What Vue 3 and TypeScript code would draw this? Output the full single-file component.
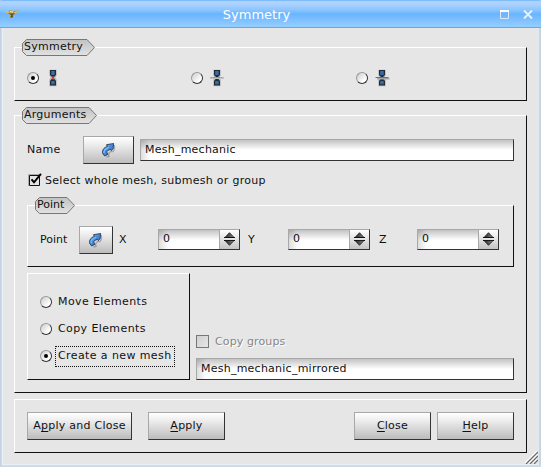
<script setup lang="ts">
import { ref } from 'vue'

interface Axis {
  name: string
  value: number
}

const mirror = ref(0)
const name = ref('Mesh_mechanic')
const wholeMesh = ref(true)
const axes = ref<Axis[]>([
  { name: 'X', value: 0 },
  { name: 'Y', value: 0 },
  { name: 'Z', value: 0 },
])
const actions = ['Move Elements', 'Copy Elements', 'Create a new mesh']
const action = ref(2)
const newName = ref('Mesh_mechanic_mirrored')

function step(axis: Axis, by: number) {
  axis.value += by
}
</script>

<template>
  <div class="window">
    <svg class="defs" width="0" height="0" aria-hidden="true">
      <defs>
        <linearGradient id="tag-fill" x1="0" y1="0" x2="0" y2="1">
          <stop offset="0" stop-color="#c2c2c2" />
          <stop offset="1" stop-color="#e2e2e2" />
        </linearGradient>
        <linearGradient id="arrow-fill" x1="0" y1="0" x2="1" y2="1">
          <stop offset="0" stop-color="#74b4f4" />
          <stop offset="1" stop-color="#1b62b8" />
        </linearGradient>
        <linearGradient id="spin-fill" x1="0" y1="0" x2="1" y2="0">
          <stop offset="0" stop-color="#222" />
          <stop offset="1" stop-color="#888" />
        </linearGradient>
        <symbol id="pick" viewBox="0 0 16 16">
          <path d="M5.5 15 L8 14.5 L7.4 12 L9.5 9.6 L12 9.5 L13.4 7 V3" fill="none" stroke="#777" stroke-width="1.4" opacity=".55" />
          <path d="M3.7 14 L1.7 11.5 Q1 9 2.6 6.8 Q4 5 6.3 4.6 L5.5 2.7 L12.6 1.5 L12.2 6.5 L10.3 8.7 L9.4 7.4 Q6.6 8 6 9.6 Q5.6 10.8 6.8 12.4 Z" fill="url(#arrow-fill)" stroke="#172b49" stroke-width=".8" />
          <path d="M3 11 Q2.6 6.8 8 5.3" fill="none" stroke="#78bdff" stroke-width="1.2" />
        </symbol>
      </defs>
    </svg>

    <header class="titlebar">
      <svg class="app-icon" width="16" height="10" viewBox="0 0 16 10">
        <path d="M0 2 L4 2.4 L6 1 L9 2 L15 1.5 L11.5 5 L9.5 5.8 L9 8.5 L5.5 8.5 L7 6 L3.5 4.6 Z" fill="#c09a35" />
        <path d="M0 2 L4 2.4 L6 3.2 L3 4 Z M10 3.6 L15 1.5 L11.5 4.6 Z" fill="#dcc78a" />
        <path d="M4.5 4.6 L11 4.4 L8.6 5.9 L9 8.2 L6.3 8.7 L7.3 6 Z" fill="#5d4a20" />
        <path d="M6 2.6 L9 3" stroke="#fff1ab" />
      </svg>
      <h1>Symmetry</h1>
      <svg class="maximize" width="9" height="9" viewBox="0 0 9 9">
        <path d="M.5 1.5 V8.5 H8.5 V1.5" fill="none" stroke="#e0eaf4" />
        <path d="M0 1 H9" stroke="#fff" stroke-width="2" />
      </svg>
      <svg class="close" width="10" height="9" viewBox="0 0 10 9">
        <path d="M1 .5 L9 8.5 M9 .5 L1 8.5" stroke="#e9f1f8" stroke-width="2" />
      </svg>
    </header>

    <main>
      <section class="group symmetry">
        <div class="tag tag-symmetry">
          <svg width="73" height="17" viewBox="0 0 73 17">
            <path d="M4.5 .5 H65 L72.5 8.5 L65 16.5 H4.5 L.5 12.5 V4.5 Z" fill="url(#tag-fill)" stroke="#777" />
          </svg>
          <span>Symmetry</span>
        </div>
        <div class="mirror-row">
          <div v-for="i in 3" :key="i" class="mirror-choice" @click="mirror = i - 1">
            <span class="radio" :class="{ on: mirror === i - 1 }" />
            <svg width="16" height="18" viewBox="0 0 16 18">
              <path d="M5 1.5 H11 V6 L9.7 8.5 L11 11 V16.5 H5 V11 L6.3 8.5 L5 6 Z" fill="#b5b5b5" stroke="#b9b9b9" stroke-width="1.5" />
              <path d="M5 1 H11 V6 L9 8 H7 L5 6 Z M7 9.5 H9 L11 12 V16.5 H5 V12 Z" fill="#202c38" />
              <path d="M6.2 2 H9.7 V6 H6.2 Z M6.2 12 H9.7 V15.3 H6.2 Z" fill="#356dab" />
              <rect v-if="i === 1" x="7" y="7.3" width="2" height="3.3" fill="#c94736" />
              <path v-if="i === 2" d="M1 9.5 H15" stroke="#c4c4c4" />
              <path v-if="i === 2" d="M1.5 8.5 H14.5" stroke="#c87b7b" stroke-dasharray="2 .5" />
              <path v-if="i === 3" d="M3 9.7 H15.5" stroke="#a5a5a5" stroke-width="1.5" />
              <path v-if="i === 3" d="M1.5 8.5 H14.5" stroke="#c94a46" />
            </svg>
          </div>
        </div>
      </section>

      <section class="group arguments">
        <div class="tag tag-arguments">
          <svg width="76" height="17" viewBox="0 0 76 17">
            <path d="M4.5 .5 H67 L74.5 8.5 L67 16.5 H4.5 L.5 12.5 V4.5 Z" fill="url(#tag-fill)" stroke="#777" />
          </svg>
          <span>Arguments</span>
        </div>

        <div class="name-row">
          <label>Name</label>
          <button class="btn pick-wide"><svg width="16" height="16"><use href="#pick" /></svg></button>
          <input v-model="name" class="field" spellcheck="false" />
        </div>

        <div class="check-row" @click="wholeMesh = !wholeMesh">
          <svg width="14" height="14" viewBox="0 0 14 14">
            <rect x="1" y="2" width="11" height="11" fill="#e2e2e2" />
            <path d="M.5 13 V1.5 H12" fill="none" stroke="#aaa" />
            <path d="M1.5 2.5 H11.5 V12.5 H1.5 Z" fill="none" stroke="#111" />
            <path v-if="wholeMesh" d="M3.5 6.3 L6 9.3 L13 .8" fill="none" stroke="#000" stroke-width="2" />
          </svg>
          <span>Select whole mesh, submesh or group</span>
        </div>

        <section class="group point">
          <div class="tag tag-point">
            <svg width="41" height="17" viewBox="0 0 41 17">
              <path d="M4.5 .5 H32 L39.5 8.5 L32 16.5 H4.5 L.5 12.5 V4.5 Z" fill="url(#tag-fill)" stroke="#777" />
            </svg>
            <span>Point</span>
          </div>
          <div class="point-row">
            <label class="point-label">Point</label>
            <button class="btn pick-small"><svg width="16" height="16"><use href="#pick" /></svg></button>
            <div v-for="axis in axes" :key="axis.name" class="axis">
              <label>{{ axis.name }}</label>
              <div class="spin">
                <span class="spin-value">{{ axis.value }}</span>
                <span class="spin-buttons">
                  <svg width="11" height="14" viewBox="0 0 11 14">
                    <path d="M5.5 .7 L10 5.5 H1 Z" fill="url(#spin-fill)" stroke="#111" stroke-width=".8" @click="step(axis, 1)" />
                    <path d="M0 5.5 H11 M0 8.5 H11" stroke="#111" />
                    <path d="M5.5 13.3 L10 8.5 H1 Z" fill="url(#spin-fill)" stroke="#111" stroke-width=".8" @click="step(axis, -1)" />
                  </svg>
                </span>
              </div>
            </div>
          </div>
        </section>

        <div class="lower">
          <div class="group actions">
            <div v-for="(label, i) in actions" :key="label" class="action" @click="action = i">
              <span class="radio" :class="{ on: action === i }" />
              <span class="action-label" :class="{ focused: action === i }">{{ label }}</span>
            </div>
          </div>
          <div class="copy">
            <div class="copy-check"><span class="box" /><span class="copy-label">Copy groups</span></div>
            <input v-model="newName" class="field" spellcheck="false" />
          </div>
        </div>
      </section>

      <footer class="group buttons">
        <button class="btn apply-close"><span>A<u>p</u>ply and Close</span></button>
        <button class="btn apply"><span><u>A</u>pply</span></button>
        <button class="btn dismiss"><span><u>C</u>lose</span></button>
        <button class="btn help"><span><u>H</u>elp</span></button>
      </footer>
    </main>

    <svg class="grip" width="13" height="13" viewBox="0 0 13 13">
      <path d="M0 12 L12 0 M4 12 L12 4 M8 12 L12 8" stroke="#fff" stroke-width="1.2" />
      <path d="M1 13 L13 1 M5 13 L13 5 M9 13 L13 9" stroke="#666" stroke-width="1.2" />
    </svg>
  </div>
</template>

<style>
body {
  margin: 0;
  overflow: hidden;
}
</style>

<style scoped>
* {
  box-sizing: border-box;
}
.window {
  position: relative;
  width: 541px;
  height: 467px;
  background: #e6e6e6;
  box-shadow: inset 1px 0 #c5d1e0, inset 2px -2px #d0dbe6, inset -2px -2px #c8d6e1, inset 3px -3px #e8f0f7, inset -4px -3px #dfe9f1;
  font: 11px/14px "DejaVu Sans", sans-serif;
  letter-spacing: 0.24px;
  color: #111;
}
.defs {
  position: absolute;
}
svg {
  display: block;
  flex: none;
}
.titlebar {
  display: flex;
  height: 28px;
  border-top: 1px solid #7dbdfb;
  border-bottom: 1px solid #64a7ea;
  border-radius: 2px 2px 0 0;
  background: linear-gradient(#add0fc 0, #b1d3fd 2px, #8bc5ff 9px, #6ab5ff 13px, #78bcff 17px, #94ceff 100%);
}
.app-icon {
  margin: 8px 0 0 4px;
}
h1 {
  flex: 1;
  margin: 5px 0 0 4px;
  padding-right: 11px;
  font: 13px/18px "DejaVu Sans", sans-serif;
  letter-spacing: 0;
  text-align: center;
  color: #fff;
}
.maximize {
  margin: 9px 14px 0 0;
}
.close {
  margin: 9px 8px 0 0;
}
main {
  display: flex;
  flex-direction: column;
  padding: 19px 14px 0;
}
.group {
  border: 1px solid;
  border-color: #fff #111 #111 #fff;
}
.symmetry {
  height: 54px;
}
.arguments {
  height: 278px;
  margin-top: 14px;
}
.tag {
  display: grid;
  height: 17px;
  margin: -9px 0 0 7px;
}
.tag > * {
  grid-area: 1 / 1;
}
.tag span {
  padding: 1px 0 0 2px;
}
.mirror-row {
  display: flex;
  gap: 132px;
  padding: 13px 0 0 12px;
}
.mirror-choice {
  display: flex;
  align-items: center;
  gap: 6px;
  width: 33px;
}
.radio {
  flex: none;
  display: grid;
  place-items: center;
  width: 12px;
  height: 12px;
  border: 1px solid;
  border-color: #999 #333 #333 #999;
  border-radius: 50%;
  background: linear-gradient(135deg, #ccc, #fff 75%);
}
.radio.on::after {
  content: "";
  width: 4px;
  height: 4px;
  border-radius: 50%;
  background: #000;
}
.mirror-choice:nth-child(2) {
  margin-left: -1px;
}
.name-row {
  display: flex;
  height: 28px;
  margin: 12px 0 0 12px;
}
.name-row label {
  width: 56px;
  padding-top: 7px;
}
.btn {
  display: flex;
  align-items: center;
  justify-content: center;
  height: 28px;
  padding: 0;
  border: 1px solid;
  border-color: #a8a8a8 #333 #333 #a8a8a8;
  background: linear-gradient(#fff, #f0f0f0 25%, #bcbcbc);
  font: 11px/14px "DejaVu Sans", sans-serif;
  letter-spacing: 0.24px;
  color: #111;
}
.btn u {
  text-underline-offset: 2px;
  text-decoration-skip-ink: none;
}
.btn span {
  padding-bottom: 1px;
}
.pick-wide {
  width: 51px;
}
.pick-small {
  width: 34px;
}
.field {
  display: block;
  height: 22px;
  padding: 0 4px 2px;
  border: 1px solid;
  border-color: #a8a8a8 #333 #333 #a8a8a8;
  border-radius: 0;
  outline: none;
  background: linear-gradient(90deg, #0002, #0000 9px), linear-gradient(#c3c3c3, #fff 10px);
  font: 11px/14px "DejaVu Sans", sans-serif;
  letter-spacing: 0.24px;
  color: #111;
}
.name-row .field {
  width: 374px;
  margin: 3px 0 0 6px;
}
.check-row {
  display: flex;
  height: 14px;
  margin: 10px 0 0 13px;
}
.check-row svg {
  margin-top: -1px;
}
.check-row span {
  padding-left: 3px;
  letter-spacing: 0.29px;
}
.point {
  width: 487px;
  height: 62px;
  margin: 17px 0 0 12px;
}
.point .tag span,
.point-label {
  letter-spacing: 0;
}
.point-row {
  display: flex;
  height: 28px;
  margin: 12px 0 0 12px;
}
.point-label {
  width: 39px;
  padding-top: 7px;
}
.axis {
  display: flex;
  width: 121px;
  margin: 3px 0 0 6px;
}
.axis + .axis {
  width: 122px;
  margin-left: 8px;
}
.axis + .axis + .axis {
  width: 120px;
  margin-left: 9px;
}
.axis label {
  flex: 1;
  padding-top: 4px;
}
.spin {
  display: flex;
  width: 82px;
  height: 21px;
  border: 1px solid;
  border-color: #a8a8a8 #333 #333 #a8a8a8;
  background: linear-gradient(90deg, #0002, #0000 9px), linear-gradient(#c3c3c3, #fff 10px);
}
.spin-value {
  width: 60px;
  padding: 2px 0 0 4px;
}
.spin-buttons {
  display: grid;
  justify-content: center;
  align-content: start;
  flex: 1;
  padding-top: 2px;
  border-left: 1px solid #a8a8a8;
  background: linear-gradient(#fff, #c4c4c4);
}
.lower {
  display: flex;
  margin: 6px 0 0 12px;
}
.actions {
  display: flex;
  flex-direction: column;
  gap: 6px;
  width: 163px;
  height: 107px;
  padding: 18px 0 0 12px;
}
.action {
  display: flex;
  height: 21px;
  gap: 3px;
}
.action .radio {
  margin-top: 4px;
}
.action-label {
  height: 21px;
  padding: 2px 2px;
  border: 1px solid transparent;
  letter-spacing: 0.4px;
  white-space: nowrap;
}
.action-label.focused {
  width: 120px;
  border: 1px dotted #111;
}
.copy {
  display: flex;
  flex-direction: column;
  width: 318px;
  margin-left: 6px;
  padding-top: 61px;
}
.copy-check {
  display: flex;
  height: 24px;
  gap: 6px;
  color: #868686;
  text-shadow: 1px 1px #fff;
}
.copy-label {
  padding-top: 1px;
  letter-spacing: 0.12px;
}
.box {
  width: 13px;
  height: 13px;
  margin-top: 1px;
  border: 1px solid #777;
  background: linear-gradient(135deg, #d0d0d0, #e6e6e6);
}
.copy .field {
  width: 318px;
}
.buttons {
  display: flex;
  height: 54px;
  margin-top: 6px;
  padding: 12px 12px 0;
}
.apply-close {
  width: 105px;
}
.apply {
  width: 77px;
  margin-left: 16px;
}
.dismiss {
  width: 77px;
  margin-left: auto;
}
.help {
  width: 77px;
  margin-left: 6px;
}
.grip {
  position: absolute;
  right: 3px;
  bottom: 3px;
}
</style>
